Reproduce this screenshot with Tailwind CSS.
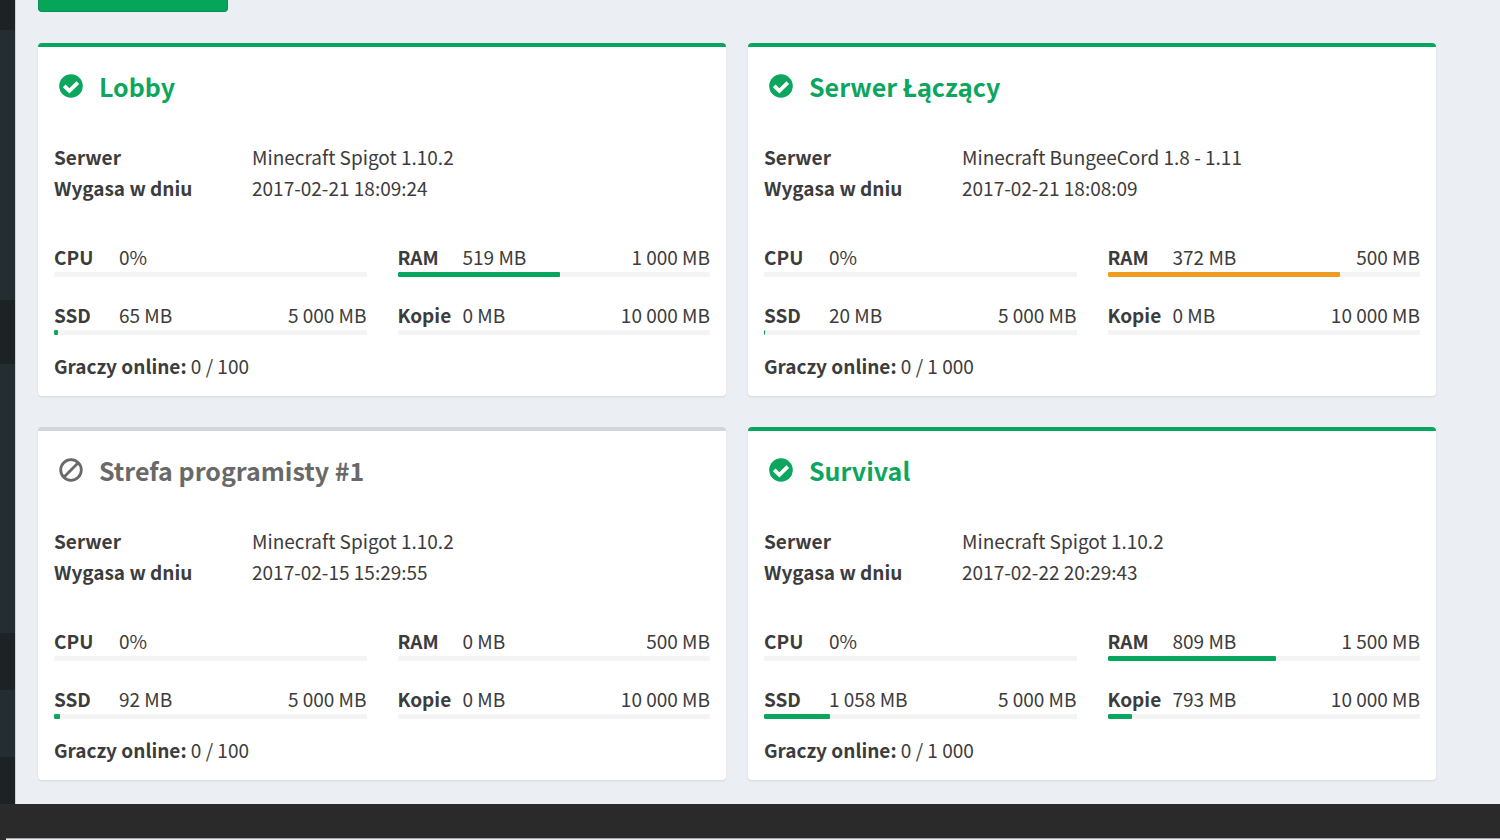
<!DOCTYPE html>
<html lang="pl">
<head>
    <meta charset="UTF-8">
    <meta name="viewport" content="width=device-width, initial-scale=1.0">
    <title>Serwery</title>
    <script src="https://cdn.jsdelivr.net/npm/@tailwindcss/browser@4"></script>
</head>
<body class="min-h-screen flex flex-col bg-[#2a2a2a] font-['Noto_Sans_CJK_SC','Noto_Sans',sans-serif] text-[19px] text-[#3c3c3c]">
    <div class="flex flex-1">
        <!-- Collapsed sidebar -->
        <aside class="flex flex-col w-[15px] shrink-0 bg-[#1d2325]">
            <div class="h-[30px]"></div>
            <div class="h-[270px] bg-[#232d32]"></div>
            <div class="h-16"></div>
            <div class="h-[269px] bg-[#232d32]"></div>
            <div class="h-[57px]"></div>
            <div class="h-[67px] bg-[#232d32]"></div>
        </aside>
        <main class="flex-1 border-l border-[#cdd1d5] bg-[#ebeef3] pl-[22px] pr-16 pb-6">
            <button type="button" aria-label="Dodaj serwer" class="block w-[190px] h-3 rounded-b border border-t-0 border-[#079150] bg-[#05a65a]"></button>
            <div id="servers" class="grid grid-cols-2 gap-x-[22px] gap-y-[31px] mt-[31px]"></div>
        </main>
    </div>
    <footer class="pl-[6px]">
        <div class="h-[34px]"></div>
        <div class="h-[2px] border-t border-[#a5a6a8] bg-[#ebeef3]"></div>
    </footer>

    <script>
        const GREEN = "bg-[#08a65c]";
        const ORANGE = "bg-[#f09c1e]";

        const servers = [
            {
                name: "Lobby", active: true, engine: "Minecraft Spigot 1.10.2", expires: "2017-02-21 18:09:24", players: "0 / 100",
                stats: [
                    { label: "CPU", used: "0%", max: "", pct: 0 },
                    { label: "RAM", used: "519 MB", max: "1 000 MB", pct: 51.9 },
                    { label: "SSD", used: "65 MB", max: "5 000 MB", pct: 1.3 },
                    { label: "Kopie", used: "0 MB", max: "10 000 MB", pct: 0 },
                ]
            },
            {
                name: "Serwer Łączący", active: true, engine: "Minecraft BungeeCord 1.8 - 1.11", expires: "2017-02-21 18:08:09", players: "0 / 1 000",
                stats: [
                    { label: "CPU", used: "0%", max: "", pct: 0 },
                    { label: "RAM", used: "372 MB", max: "500 MB", pct: 74.4, color: ORANGE },
                    { label: "SSD", used: "20 MB", max: "5 000 MB", pct: 0.4 },
                    { label: "Kopie", used: "0 MB", max: "10 000 MB", pct: 0 },
                ]
            },
            {
                name: "Strefa programisty #1", active: false, engine: "Minecraft Spigot 1.10.2", expires: "2017-02-15 15:29:55", players: "0 / 100",
                stats: [
                    { label: "CPU", used: "0%", max: "", pct: 0 },
                    { label: "RAM", used: "0 MB", max: "500 MB", pct: 0 },
                    { label: "SSD", used: "92 MB", max: "5 000 MB", pct: 1.84 },
                    { label: "Kopie", used: "0 MB", max: "10 000 MB", pct: 0 },
                ]
            },
            {
                name: "Survival", active: true, engine: "Minecraft Spigot 1.10.2", expires: "2017-02-22 20:29:43", players: "0 / 1 000",
                stats: [
                    { label: "CPU", used: "0%", max: "", pct: 0 },
                    { label: "RAM", used: "809 MB", max: "1 500 MB", pct: 53.9 },
                    { label: "SSD", used: "1 058 MB", max: "5 000 MB", pct: 21.1 },
                    { label: "Kopie", used: "793 MB", max: "10 000 MB", pct: 7.93 },
                ]
            },
        ];

        const checkIcon = `
            <svg class="size-6" viewBox="0 0 24 24" aria-hidden="true">
                <circle cx="12" cy="12" r="11.8" fill="currentColor"/>
                <path d="M5.2 11.8 L10.4 16.8 L18.8 8.6" fill="none" stroke="#fff" stroke-width="3.8"/>
            </svg>`;

        const banIcon = `
            <svg class="size-6" viewBox="0 0 24 24" fill="none" stroke="currentColor" stroke-width="2.8" aria-hidden="true">
                <circle cx="12" cy="12" r="10.3"/>
                <path d="M4.8 19.2 L19.2 4.8"/>
            </svg>`;

        function stat(s) {
            return `
                <div>
                    <div class="flex leading-[30px]">
                        <span class="w-[65px] font-bold">${s.label}</span>
                        <span>${s.used}</span>
                        <span class="ml-auto">${s.max}</span>
                    </div>
                    <div class="h-[5px] rounded-[1px] bg-[#f4f4f4] overflow-hidden">
                        <div class="h-full rounded-[1px] ${s.color || GREEN}" style="width: ${s.pct}%"></div>
                    </div>
                </div>`;
        }

        function card(s) {
            return `
                <section class="rounded border-t-4 ${s.active ? "border-[#08a65c]" : "border-[#d2d6de]"} bg-white px-4 pt-5 pb-4 shadow-[0_1px_2px_rgba(0,0,0,0.1)]">
                    <h2 class="flex items-center gap-4 pl-[5px] text-[25px] leading-[38px] font-bold ${s.active ? "text-[#0ca65e]" : "text-[#696969]"}">
                        ${s.active ? checkIcon : banIcon}
                        <a href="#">${s.name}</a>
                    </h2>
                    <dl class="grid grid-cols-[198px_1fr] mt-9 leading-[31px]">
                        <dt class="font-bold">Serwer</dt>
                        <dd>${s.engine}</dd>
                        <dt class="font-bold">Wygasa w dniu</dt>
                        <dd>${s.expires}</dd>
                    </dl>
                    <div class="grid grid-cols-2 gap-x-[31px] gap-y-[23px] mt-[39px]">
                        ${s.stats.map(stat).join("")}
                    </div>
                    <p class="mt-4 leading-[29px]"><b>Graczy online:</b> ${s.players}</p>
                </section>`;
        }

        document.getElementById("servers").innerHTML = servers.map(card).join("");
    </script>
</body>
</html>
